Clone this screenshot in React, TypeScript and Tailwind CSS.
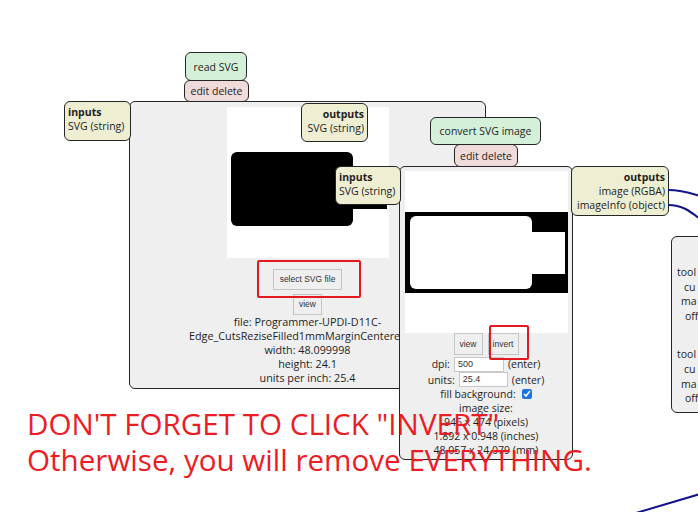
import React from "react";

const frame = "absolute rounded-[6px] border border-[#262626]";
const port = `${frame} bg-[#eeeed3] px-[3px] pt-[3px] leading-[14px]`;
const btn =
  "border border-[#c4c4c4] bg-[#efefef] text-[#333] font-['Liberation_Sans',Arial,sans-serif] text-[8.5px] leading-none";
const field =
  "h-[15px] border border-[#c8c8c8] bg-white px-[3px] font-['Liberation_Sans',Arial,sans-serif] text-[9px] leading-[13px] text-[#333]";

function Port({ className, title, lines, right }: { className: string; title: string; lines: string[]; right?: boolean }) {
  return (
    <div className={`${port} ${className} ${right ? "text-right" : "text-left"}`}>
      <div className="font-bold">{title}</div>
      {lines.map((l) => (
        <div key={l} className="whitespace-nowrap">{l}</div>
      ))}
    </div>
  );
}

export default function App() {
  return (
    <div className="relative w-[698px] h-[512px] overflow-hidden bg-white font-['Open_Sans',sans-serif] text-[10.5px] leading-[14px] text-[#1e1e1e]">
      {/* read SVG node */}
      <div className={`${frame} left-[129px] top-[101px] w-[357px] h-[288px] bg-[#efefef] flex flex-col items-center pt-[5px]`}>
        <div className="w-[162px] h-[151px] bg-white shrink-0">
          <svg width="162" height="151" viewBox="0 0 162 151">
            <rect x="4" y="45" width="122" height="74" rx="6" fill="#000" />
            <rect x="120" y="61" width="40" height="41" fill="#000" />
          </svg>
        </div>
        <button className={`${btn} mt-[11px] h-[21px] px-[6px]`}>select SVG file</button>
        <button className={`${btn} mt-[4px] h-[21px] w-[29px]`}>view</button>
        <div className="text-center text-[10.8px]">
          <div className="whitespace-nowrap">file: Programmer-UPDI-D11C-</div>
          <div className="whitespace-nowrap">Edge_CutsReziseFilled1mmMarginCentered.svg</div>
          <div>width: 48.099998</div>
          <div>height: 24.1</div>
          <div>units per inch: 25.4</div>
        </div>
      </div>
      <div className={`${frame} left-[185px] top-[52px] w-[62px] h-[29px] bg-[#d5f0d9] flex items-center justify-center`}>
        read SVG
      </div>
      <div className={`${frame} left-[184px] top-[80px] w-[65px] h-[22px] bg-[#f0dbdb] flex items-center justify-center`}>
        edit delete
      </div>
      <Port className="left-[64px] top-[101px] w-[67px] h-[40px]" title="inputs" lines={["SVG (string)"]} />
      <Port className="left-[301px] top-[103px] w-[67px] h-[39px]" title="outputs" lines={["SVG (string)"]} right />

      {/* convert SVG image node */}
      <div className={`${frame} left-[399px] top-[166px] w-[174px] h-[294px] bg-[#efefef] flex flex-col items-center pt-[4px]`}>
        <div className="w-[163px] h-[162px] bg-white shrink-0">
          <svg width="163" height="162" viewBox="0 0 163 162">
            <rect x="0" y="41" width="163" height="81" fill="#000" />
            <rect x="5" y="45" width="122" height="73" rx="6" fill="#fff" />
            <rect x="120" y="61" width="40" height="42" fill="#fff" />
          </svg>
        </div>
        <div className="flex gap-[5px]">
          <button className={`${btn} h-[22px] w-[29px]`}>view</button>
          <button className={`${btn} h-[22px] w-[31px]`}>invert</button>
        </div>
        <div className="flex items-center h-[16px] mt-[1px] whitespace-nowrap">
          <span>dpi:</span>
          <div className={`${field} ml-[4px] w-[50px]`}>500</div>
          <span className="ml-[4px]">(enter)</span>
        </div>
        <div className="flex items-center h-[15px] whitespace-nowrap">
          <span>units:</span>
          <div className={`${field} ml-[4px] w-[49px]`}>25.4</div>
          <span className="ml-[4px]">(enter)</span>
        </div>
        <div className="flex items-center h-[14px] whitespace-nowrap">
          <span>fill background:</span>
          <input type="checkbox" checked readOnly className="ml-[6px] w-[10px] h-[10px] accent-[#1a73e8]" />
        </div>
        <div className="text-center whitespace-nowrap">
          <div>image size:</div>
          <div>946 x 474 (pixels)</div>
          <div>1.892 x 0.948 (inches)</div>
          <div>48.057 x 24.079 (mm)</div>
        </div>
      </div>
      <div className={`${frame} left-[430px] top-[117px] w-[111px] h-[28px] bg-[#d5f0d9] flex items-center justify-center`}>
        convert SVG image
      </div>
      <div className={`${frame} left-[454px] top-[144px] w-[64px] h-[23px] bg-[#f0dbdb] flex items-center justify-center`}>
        edit delete
      </div>
      <Port className="left-[335px] top-[166px] w-[66px] h-[39px]" title="inputs" lines={["SVG (string)"]} />
      <Port
        className="left-[571px] top-[166px] w-[98px] h-[50px]"
        title="outputs"
        lines={["image (RGBA)", "imageInfo (object)"]}
        right
      />

      {/* next node, cut off at the edge */}
      <div className={`${frame} left-[671px] top-[236px] w-[80px] h-[177px] bg-[#efefef] pt-[28px] leading-[14.6px]`}>
        <div className="pl-[5px]">tool</div>
        <div className="pl-[12px]">cu</div>
        <div className="pl-[9px]">ma</div>
        <div className="pl-[13px]">off</div>
        <div className="pl-[5px] mt-[24px]">tool</div>
        <div className="pl-[12px]">cu</div>
        <div className="pl-[9px]">ma</div>
        <div className="pl-[13px]">off</div>
      </div>

      {/* wires */}
      <svg className="absolute left-0 top-0 pointer-events-none" width="698" height="512" viewBox="0 0 698 512">
        <path d="M668 190 C 682 190, 690 193, 700 196" stroke="#14148a" strokeWidth="2" fill="none" />
        <path d="M668 205 C 682 205, 690 211, 700 219" stroke="#14148a" strokeWidth="2" fill="none" />
        <path d="M636 513 L 700 494" stroke="#14148a" strokeWidth="2" fill="none" />
      </svg>

      {/* annotations */}
      <div className="absolute left-[257px] top-[260px] w-[104px] h-[38px] rounded-[2px] border-2 border-[#e3191f]" />
      <div className="absolute left-[489px] top-[325px] w-[40px] h-[35px] rounded-[2px] border-2 border-[#e3191f]" />
      <div className="absolute left-[27px] top-[406px] text-[29.6px] leading-[36px] text-[#ec1c24] whitespace-nowrap">
        <div>DON'T FORGET TO CLICK "INVERT"</div>
        <div>Otherwise, you will remove EVERYTHING.</div>
      </div>
    </div>
  );
}
